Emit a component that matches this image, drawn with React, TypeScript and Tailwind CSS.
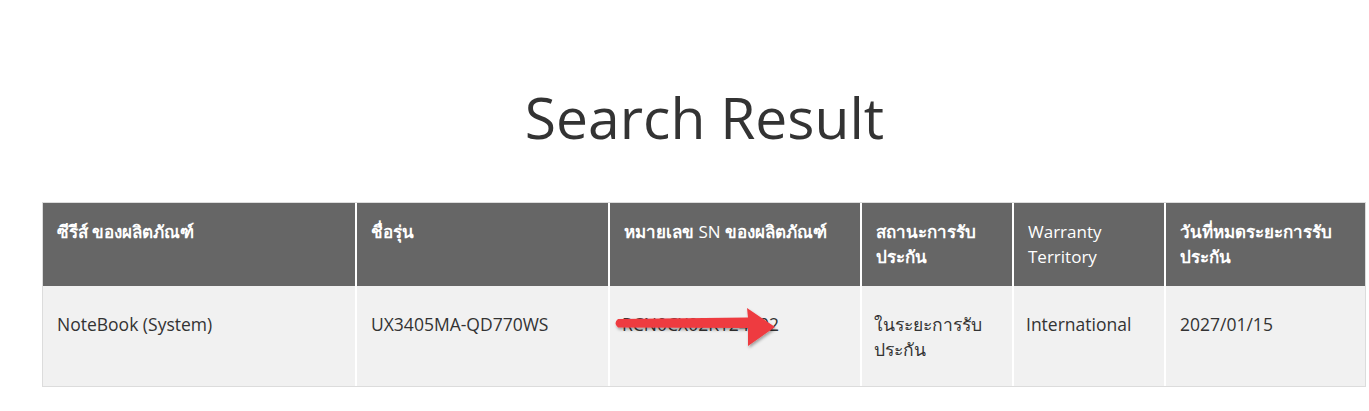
import React from 'react';

const FONT = { fontFamily: '"Open Sans", "Noto Sans", "Liberation Sans", sans-serif' };

const HEADERS: { label: string; w: string; thai?: boolean }[] = [
  { label: 'ซีรีส์ ของผลิตภัณฑ์', w: 'w-[312px]', thai: true },
  { label: 'ชื่อรุ่น', w: 'w-[253px]', thai: true },
  { label: 'หมายเลข SN ของผลิตภัณฑ์', w: 'w-[252px]' },
  { label: 'สถานะการรับประกัน', w: 'w-[152px]', thai: true },
  { label: 'Warranty Territory', w: 'w-[152px]' },
  { label: 'วันที่หมดระยะการรับประกัน', w: 'w-[203px]', thai: true },
];

// red annotation arrow drawn over the serial number
function Arrow() {
  return (
    <svg className="absolute left-[-2px] top-0" width="200" height="100" viewBox="0 0 200 100">
      <defs>
        <filter id="sh" x="-10%" y="-30%" width="120%" height="160%">
          <feDropShadow dx="1" dy="2" stdDeviation="1.5" floodColor="#000" floodOpacity="0.35" />
        </filter>
      </defs>
      <path
        filter="url(#sh)"
        fill="#ee3b3f"
        d="M10 33 L140 31.5 L139 22 L167 41 L140 60 L140 42 L10 41.5 Q5 37 10 33 Z"
      />
    </svg>
  );
}

export default function App() {
  return (
    <div className="w-[1369px] h-[411px] bg-white text-[#333]" style={FONT}>
      <h1 className="pt-[77px] text-center text-[57px] leading-[80px] font-normal text-[#333] pl-[40px]">Search Result</h1>
      <div className="ml-[42px] mt-[45px] w-[1324px] border border-[#dcdcdc]">
        <div className="flex bg-[#666666] h-[83px]">
          {HEADERS.map((h, i) => (
            <div
              key={h.label}
              className={`${h.w} shrink-0 px-[14px] pt-[16px] text-[17px] leading-[25px] text-white ${i > 0 ? 'border-l-2 border-white' : ''} ${h.thai ? 'font-semibold' : ''}`}
            >
              {h.label === 'หมายเลข SN ของผลิตภัณฑ์' ? (
                <>
                  <span className="font-semibold">หมายเลข</span> SN <span className="font-semibold">ของผลิตภัณฑ์</span>
                </>
              ) : (
                h.label
              )}
            </div>
          ))}
        </div>
        <div className="flex bg-[#f1f1f1] h-[100px] text-[17.5px] leading-[25px]">
          <div className="w-[312px] shrink-0 px-[14px] pt-[26px]">NoteBook (System)</div>
          <div className="w-[253px] shrink-0 px-[14px] pt-[26px] border-l-2 border-white">UX3405MA-QD770WS</div>
          <div className="relative w-[252px] shrink-0 px-[12px] pt-[26px] border-l-2 border-white">
            RCN0CX02K124402
            <Arrow />
          </div>
          <div className="w-[152px] shrink-0 px-[12px] pt-[26px] border-l-2 border-white font-medium">ในระยะการรับประกัน</div>
          <div className="w-[152px] shrink-0 px-[12px] pt-[26px] border-l-2 border-white">International</div>
          <div className="w-[203px] shrink-0 px-[14px] pt-[26px] border-l-2 border-white">2027/01/15</div>
        </div>
      </div>
    </div>
  );
}
